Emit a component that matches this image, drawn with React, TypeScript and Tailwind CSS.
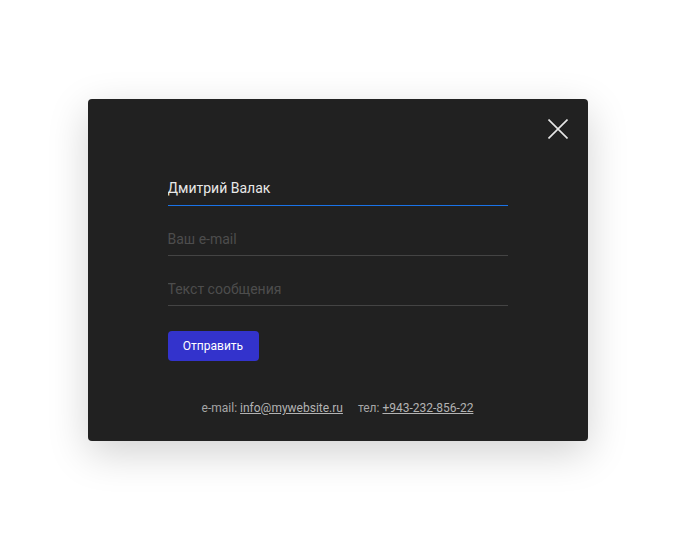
import { useState } from "react";

export default function App() {
  const [name, setName] = useState("Дмитрий Валак");
  const [email, setEmail] = useState("");
  const [message, setMessage] = useState("");

  return (
    <div className="flex h-[540px] w-full items-center justify-center bg-white font-['Roboto',sans-serif]">
      <div className="relative w-[500px] rounded-[4px] bg-[#212121] px-20 pb-[25px] pt-[71px] shadow-[0_12px_40px_rgba(0,0,0,0.18)]">
        <button
          type="button"
          className="absolute right-5 top-5 h-5 w-5 text-[#e6e6e6]"
          aria-label="Закрыть"
        >
          <svg viewBox="0 0 20 20" className="h-5 w-5" fill="none" stroke="currentColor" strokeWidth="1.6">
            <path d="M0.5 0.5 L19.5 19.5 M19.5 0.5 L0.5 19.5" />
          </svg>
        </button>

        <form className="flex flex-col" onSubmit={(e) => e.preventDefault()}>
          <input
            type="text"
            value={name}
            onChange={(e) => setName(e.target.value)}
            className="h-9 w-full border-b border-[#1a73e8] bg-transparent text-[14px] text-[#e8e8e8] outline-none placeholder:text-[#4d4d4d]"
          />
          <input
            type="email"
            value={email}
            onChange={(e) => setEmail(e.target.value)}
            placeholder="Ваш e-mail"
            className="mt-[14px] h-9 w-full border-b border-[#444444] bg-transparent pt-[2px] text-[14px] text-[#e8e8e8] outline-none placeholder:text-[#4d4d4d]"
          />
          <input
            type="text"
            value={message}
            onChange={(e) => setMessage(e.target.value)}
            placeholder="Текст сообщения"
            className="mt-[14px] h-9 w-full border-b border-[#444444] bg-transparent pt-[2px] text-[14px] text-[#e8e8e8] outline-none placeholder:text-[#4d4d4d]"
          />
          <button
            type="submit"
            className="mt-[25px] h-[30px] w-[91px] rounded-[4px] bg-[#3333cc] text-[12px] text-white"
          >
            Отправить
          </button>
        </form>

        <div className="mt-[39px] flex justify-center gap-[15px] text-[12px] leading-4 text-[#a6a6a6]">
          <span>
            e-mail:{" "}
            <a href="#" className="text-[#b3b3b3] underline">
              info@mywebsite.ru
            </a>
          </span>
          <span>
            тел:{" "}
            <a href="#" className="text-[#b3b3b3] underline">
              +943-232-856-22
            </a>
          </span>
        </div>
      </div>
    </div>
  );
}
